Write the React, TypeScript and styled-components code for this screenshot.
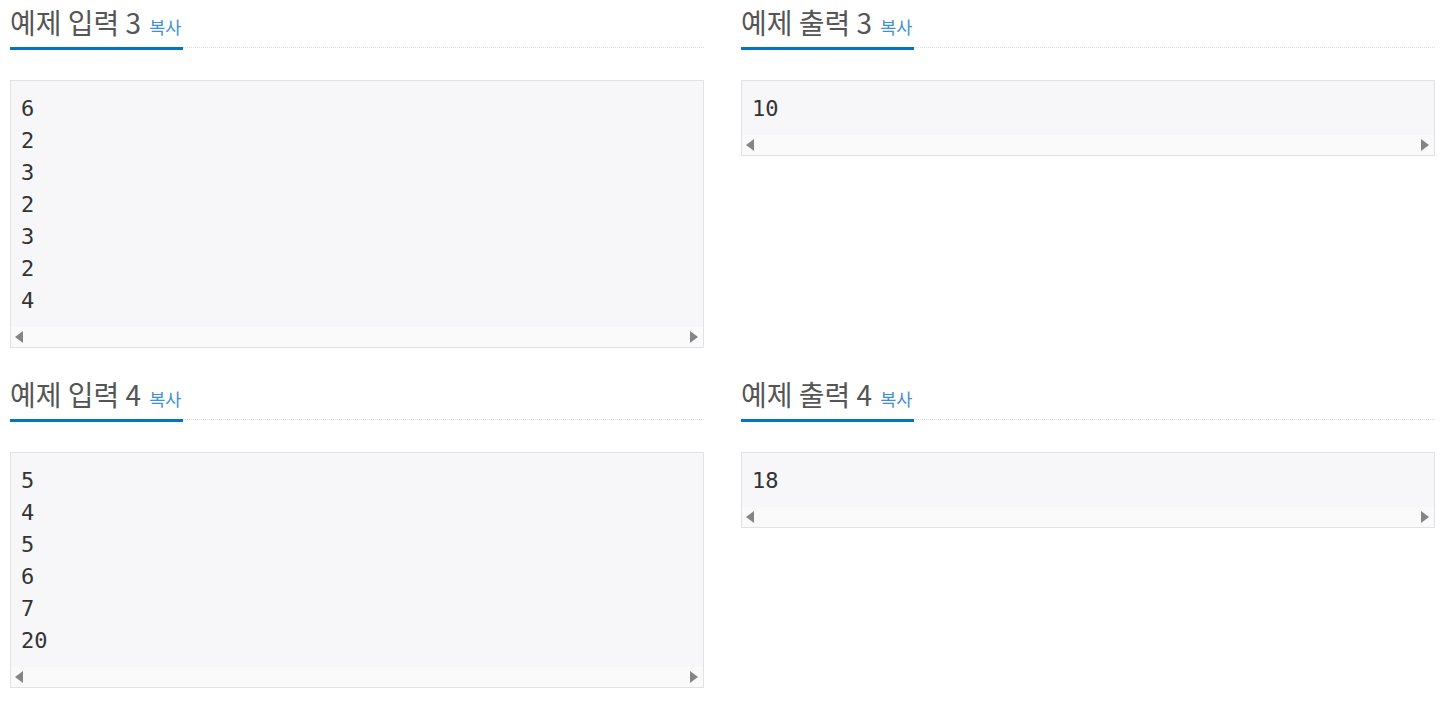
import React from 'react';
import styled, { createGlobalStyle } from 'styled-components';

const GlobalStyle = createGlobalStyle`
  html, body {
    margin: 0;
    padding: 0;
    background: #fff;
  }
  body {
    font-family: "Noto Sans CJK KR", "Noto Sans", sans-serif;
    color: #333;
  }
`;

const Page = styled.div`
  display: grid;
  grid-template-columns: 694px 694px;
  column-gap: 37px;
  padding: 0 5px 0 10px;
`;

const Section = styled.section`
  margin-bottom: 24px;
`;

const Headline = styled.div`
  display: flex;
  padding-top: 7px;
  border-bottom: 1px dotted #dcdcdc;
`;

const Title = styled.h2`
  margin: 0 0 -3px 0;
  padding: 0 2px 10px 0;
  border-bottom: 3px solid #0076c0;
  font-size: 28px;
  line-height: 30px;
  font-weight: 400;
  color: #555;
  white-space: nowrap;
`;

const CopyLink = styled.a`
  margin-left: 8px;
  font-size: 17.5px;
  line-height: 1;
  color: #3f8fd2;
  text-decoration: none;
  cursor: pointer;
`;

const SampleBox = styled.div`
  margin-top: 32px;
  border: 1px solid #e1e1e8;
  background: #f7f7f9;
`;

const Pre = styled.pre`
  margin: 0;
  padding: 12px 10px 10px;
  font-family: "DejaVu Sans Mono", monospace;
  font-size: 22px;
  line-height: 32px;
  color: #333;
  overflow: hidden;
`;

const ScrollBar = styled.div`
  height: 20px;
  background: #fafafa;
  display: flex;
  align-items: center;
  justify-content: space-between;
  padding: 0 5px 0 4px;
`;

const Arrow = styled.span<{ $dir: 'left' | 'right' }>`
  width: 0;
  height: 0;
  border-top: 6px solid transparent;
  border-bottom: 6px solid transparent;
  ${({ $dir }) =>
    $dir === 'left'
      ? 'border-right: 8px solid #858585;'
      : 'border-left: 8px solid #858585;'}
`;

type Sample = { title: string; data: string };

const samples: Sample[] = [
  { title: '예제 입력 3', data: '6\n2\n3\n2\n3\n2\n4' },
  { title: '예제 출력 3', data: '10' },
  { title: '예제 입력 4', data: '5\n4\n5\n6\n7\n20' },
  { title: '예제 출력 4', data: '18' },
];

const SampleSection = ({ title, data }: Sample) => (
  <Section>
    <Headline>
      <Title>
        {title}
        <CopyLink>복사</CopyLink>
      </Title>
    </Headline>
    <SampleBox>
      <Pre>{data}</Pre>
      <ScrollBar>
        <Arrow $dir="left" />
        <Arrow $dir="right" />
      </ScrollBar>
    </SampleBox>
  </Section>
);

export default function App() {
  return (
    <>
      <GlobalStyle />
      <Page>
        {samples.map((s) => (
          <SampleSection key={s.title} {...s} />
        ))}
      </Page>
    </>
  );
}
